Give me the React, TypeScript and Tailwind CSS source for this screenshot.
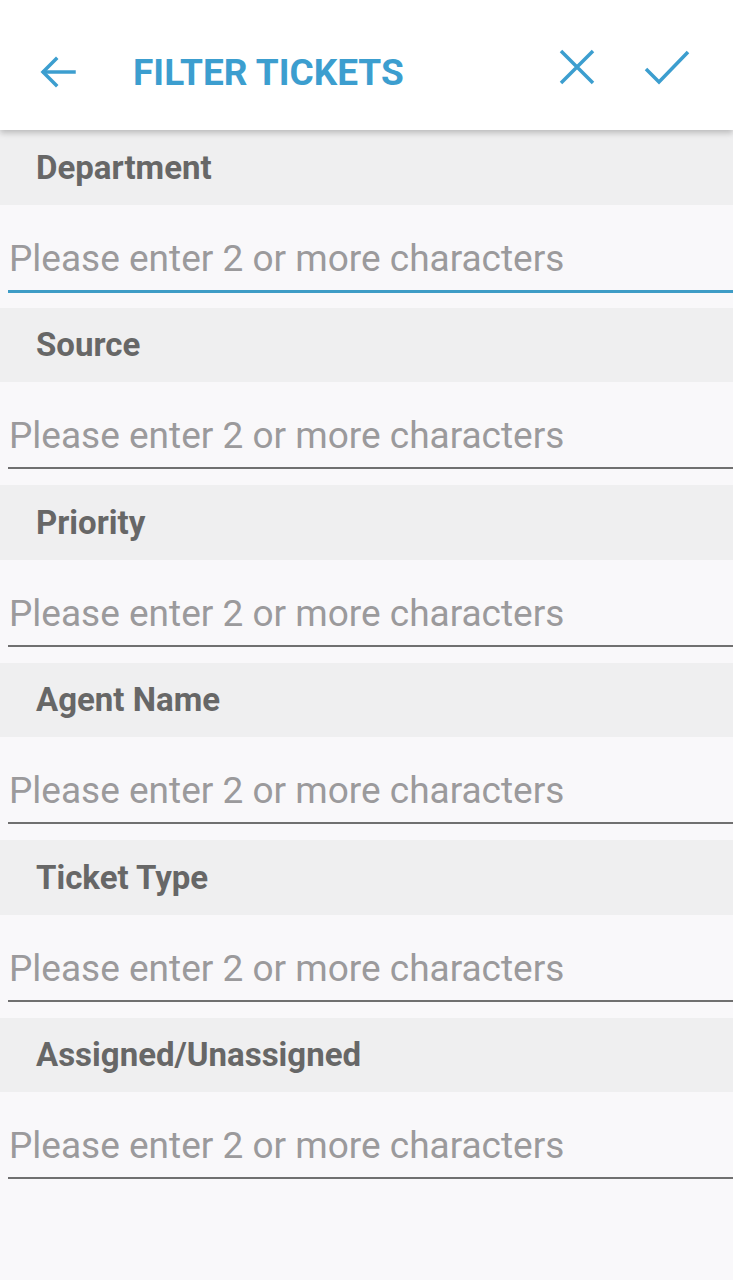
import React from 'react';

const fields = ['Department', 'Source', 'Priority', 'Agent Name', 'Ticket Type', 'Assigned/Unassigned'];

const FilterField = ({ label, active }: { label: string; active?: boolean }) => {
  return (
    <div>
      <div className="h-[74.5px] bg-[#efeff0] flex items-center pl-[36px]">
        <span className="text-[33px] font-bold text-[#676767] leading-none">{label}</span>
      </div>
      <div className="h-[103px] bg-[#f9f8fa] pt-[30px] pl-[8px]">
        <div
          className={
            active
              ? 'border-b-[3px] border-[#3e9cc6] pb-[7px]'
              : 'border-b-2 border-[#707070] pb-[7px]'
          }
        >
          <input
            readOnly
            placeholder="Please enter 2 or more characters"
            className="w-full bg-transparent h-[48px] pl-[1px] text-[37px] leading-[48px] text-[#555] placeholder:text-[#9b9a9c] outline-none"
          />
        </div>
      </div>
    </div>
  );
};

const App = () => {
  return (
    <div className="w-[733px] h-[1280px] bg-[#f9f8fa] overflow-hidden" style={{ fontFamily: 'Roboto, "Liberation Sans", sans-serif' }}>
      <header className="relative z-10 h-[130px] bg-white flex items-center pt-[14px] shadow-[0_3px_6px_rgba(0,0,0,0.22)]">
        <button className="ml-[40px] text-[#3c9ecf]">
          <svg width="36" height="32" viewBox="0 0 36 32" fill="none" stroke="currentColor" strokeWidth="3.5" strokeLinecap="square">
            <path d="M34 16H4" />
            <path d="M16 3L3 16l13 13" />
          </svg>
        </button>
        <h1 className="ml-[57px] text-[37px] font-bold uppercase text-[#3c9ecf] leading-none">
          Filter Tickets
        </h1>
        <div className="ml-auto mr-[43px] mb-[10px] flex items-center gap-[49px] text-[#3c9ecf]">
          <svg width="36" height="36" viewBox="0 0 36 36" fill="none" stroke="currentColor" strokeWidth="3.5">
            <path d="M2 2L34 34M34 2L2 34" />
          </svg>
          <svg width="46" height="35" viewBox="0 0 46 35" fill="none" stroke="currentColor" strokeWidth="3.5">
            <path d="M2 19L15 32L44 2" />
          </svg>
        </div>
      </header>
      <main>
        {fields.map((f, i) => (
          <FilterField key={f} label={f} active={i === 0} />
        ))}
      </main>
    </div>
  );
};

export default App;
